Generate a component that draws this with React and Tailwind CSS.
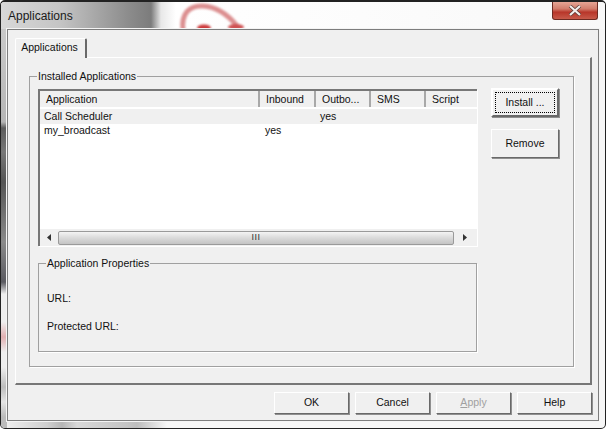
function PushButton({ children, disabled, className = '' }) {
  return (
    <button
      className={`flex items-center justify-center border border-t-white border-l-white border-r-[#696969] border-b-[#696969] bg-[#f0f0f0] shadow-[1px_1px_0_#8f8f8f] ${
        disabled ? 'text-[#a0a0a0]' : 'text-[#111]'
      } ${className}`}
    >
      {children}
    </button>
  )
}

function GroupBox({ title, className = '', children }) {
  return (
    <fieldset className={`border border-[#a0a0a0] shadow-[1px_1px_0_#fff] ${className}`}>
      <legend className="ml-[7px] px-[1px] leading-[13px]">{title}</legend>
      {children}
    </fieldset>
  )
}

function ScrollArrow({ left }) {
  return (
    <svg width="5" height="7" viewBox="0 0 5 7">
      <path d={left ? 'M4 0 L4 7 L0 3.5 Z' : 'M0 0 L0 7 L4 3.5 Z'} fill="#333" />
    </svg>
  )
}

const columns = [
  { label: 'Application', w: 'w-[220px]' },
  { label: 'Inbound', w: 'w-[56px]' },
  { label: 'Outbo...', w: 'w-[55px]' },
  { label: 'SMS', w: 'w-[55px]' },
  { label: 'Script', w: 'w-[51px]' },
]

export default function App() {
  return (
    <div className="bg-white">
      <div className="relative flex h-[429px] w-[606px] flex-col overflow-hidden rounded-[5px] border border-t-2 border-[#222] bg-[#f6f6f6] font-['Liberation_Sans',sans-serif] text-[10.5px] text-[#111]">
        {/* aero glass showing through the frame */}
        <div className="absolute left-0 top-0 h-full w-[6px] bg-[linear-gradient(180deg,#cfcfcf_0px,#b5b5b5_120px,#5c5c5c_126px,#777_150px,#555_180px,#8a8a8a_240px,#5a5a60_280px,#eeeeee_292px,#eeeeee_320px,#e2b0b2_335px,#eeeeee_350px,#eeeeee_365px,#bdbdbd_385px,#e4e4e4_400px,#bbbbbb_415px)]" />
        <div className="absolute bottom-0 left-[6px] h-[6px] w-[160px] bg-[linear-gradient(90deg,#eee_0px,#cfcfcf_40px,#b5b5b5_55px,#d8d8d8_70px,#c4c4c4_120px,#bdbdbd_130px,#f6f6f6_160px)]" />

        <div className="relative flex h-[27px] shrink-0 items-start justify-between bg-[linear-gradient(90deg,#d8d8d8_0px,#c4c4c4_60px,#8a8a8a_130px,#7c7c7c_150px,#e8e8e8_160px,#fff_175px,#f8f8f8_100%)] pl-[7px] pr-[7px]">
          <svg className="absolute left-[170px] top-0 blur-[1px]" width="90" height="30" viewBox="0 0 90 30">
            <path d="M12 28 C10 12 18 3 32 4 C48 5 58 14 66 24" fill="none" stroke="#dc8f90" strokeWidth="5" />
            <ellipse cx="33" cy="26" rx="7" ry="3.5" fill="#cc3b3c" />
            <ellipse cx="65" cy="25" rx="8" ry="3" fill="#cf5152" />
          </svg>
          <span className="relative mt-[7px] text-[12px] leading-[14px] text-[#1a1a1a]">Applications</span>
          <div className="relative flex h-[18px] w-[46px] items-center justify-center rounded-b-[3px] border border-t-0 border-[#6b2a22] bg-[linear-gradient(180deg,#e6a595_0px,#d27d6c_40%,#b8362a_60%,#c75a4a_100%)]">
            <svg width="14" height="11" viewBox="0 0 14 11">
              <path d="M2 1 L12 10 M12 1 L2 10" stroke="#5b3b36" strokeWidth="3.6" />
              <path d="M2 1 L12 10 M12 1 L2 10" stroke="#f3eeec" strokeWidth="2.2" />
            </svg>
          </div>
        </div>

        <div className="relative ml-[6px] mr-[6px] mb-[7px] flex min-h-0 flex-1 flex-col border border-[#7d7d7d] bg-[#f0f0f0] shadow-[0_0_0_1px_#f4f4f4]">
          <div className="ml-[7px] mt-[8px] mr-[6px] flex h-[347px] flex-col">
            <div className="z-10 -mb-[1px] flex h-[20px] w-[72px] items-center justify-center rounded-t-[2px] border-t border-l border-t-white border-l-white border-r-2 border-r-[#696969] bg-[#f0f0f0] pb-[2px] pr-[2px]">
              Applications
            </div>
            <div className="flex-1 border-t border-l border-t-white border-l-white border-r-2 border-b-2 border-r-[#777] border-b-[#777] pl-[13px] pr-[16px] pt-[12px]">
              <GroupBox title="Installed Applications" className="h-[297px]">
                <div className="pl-[8px] pr-[14px]">
                  <div className="mt-[6px] flex items-start justify-between">
                    <div className="flex h-[157px] w-[439px] flex-col border-t-2 border-l-2 border-t-[#777] border-l-[#777] bg-white shadow-[1px_1px_0_#fff]">
                      <div className="flex h-[18px] shrink-0 border-b-2 border-b-white bg-[#f0f0f0]">
                        {columns.map(col => (
                          <div
                            key={col.label}
                            className={`${col.w} flex h-[16px] items-center border-r-2 border-r-[#a8a8a8] pl-[6px] pt-[1px] last:border-r-0`}
                          >
                            {col.label}
                          </div>
                        ))}
                      </div>
                      <div className="flex h-[15px] items-center bg-[#f0f0f0]">
                        <span className="w-[280px] pl-[4px]">Call Scheduler</span>
                        <span>yes</span>
                      </div>
                      <div className="flex h-[14px] items-center">
                        <span className="w-[225px] pl-[4px]">my_broadcast</span>
                        <span>yes</span>
                      </div>
                      <div className="flex-1" />
                      <div className="flex h-[17px] items-center bg-[#f0f0f0]">
                        <div className="flex h-full w-[18px] items-center justify-center">
                          <ScrollArrow left />
                        </div>
                        <div className="flex h-[14px] flex-1 items-center justify-center rounded-[2px] border border-[#9a9a9a] bg-[linear-gradient(180deg,#f4f4f4,#dcdcdc_45%,#c4c4c4)]">
                          <span className="text-[9px] leading-none tracking-[0.5px] text-[#333]">III</span>
                        </div>
                        <div className="flex h-full w-[23px] items-center justify-center">
                          <ScrollArrow />
                        </div>
                      </div>
                    </div>
                    <div className="-mt-[1px] flex w-[68px] flex-col gap-[12px]">
                      <PushButton className="h-[29px] w-[68px] border-2 border-t-[#777] border-l-[#777] border-r-[#666] border-b-[#666] p-[2px]">
                        <span className="flex h-full w-full items-center justify-center border border-dotted border-black">Install ...</span>
                      </PushButton>
                      <PushButton className="h-[29px] w-[68px]">Remove</PushButton>
                    </div>
                  </div>
                  <GroupBox title="Application Properties" className="mt-[11px] h-[95px] w-[439px]">
                    <div className="pl-[8px]">
                      <p className="mt-[22px] leading-[13px]">URL:</p>
                      <p className="mt-[15px] leading-[13px]">Protected URL:</p>
                    </div>
                  </GroupBox>
                </div>
              </GroupBox>
            </div>
          </div>
          <div className="mr-[6px] mt-[7px] flex justify-end gap-[6px]">
            <PushButton className="h-[22px] w-[75px]">OK</PushButton>
            <PushButton className="h-[22px] w-[75px]">Cancel</PushButton>
            <PushButton disabled className="h-[22px] w-[75px]">
              <span><u>A</u>pply</span>
            </PushButton>
            <PushButton className="h-[22px] w-[75px]">Help</PushButton>
          </div>
        </div>
      </div>
    </div>
  )
}
